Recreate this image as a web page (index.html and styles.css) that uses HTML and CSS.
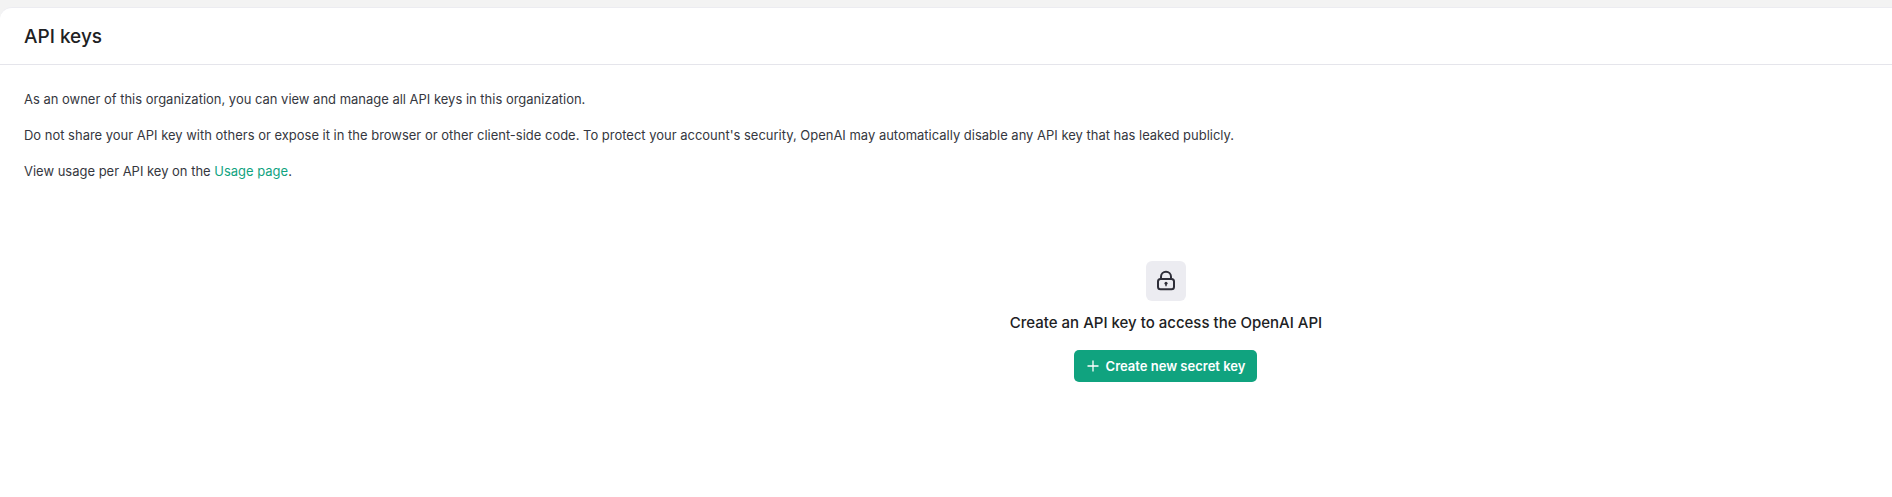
FILE: index.html
```html
<!DOCTYPE html>
<html lang="en">
<head>
<meta charset="utf-8">
<title>API keys</title>
<link rel="stylesheet" href="styles.css">
</head>
<body>
<main class="card">
  <header class="head"><h1 class="title">API keys</h1></header>
  <section class="intro">
    <p>As an owner of this organization, you can view and manage all API keys in this organization.</p>
    <p>Do not share your API key with others or expose it in the browser or other client-side code. To protect your account's security, OpenAI may automatically disable any API key that has leaked publicly.</p>
    <p>View usage per API key on the <a class="link" href="#">Usage page</a>.</p>
  </section>
  <section class="empty">
    <div class="lock">
      <svg width="24" height="24" viewBox="0 0 24 24" fill="none" stroke="#2e2e38" stroke-width="2"><rect x="4" y="10" width="16" height="10.300" rx="2.500"/><path d="M7 10V7.700a5 5 0 0 1 10 0V10"/><circle cx="12" cy="14.300" r="1.500" fill="#2e2e38" stroke="none"/><path d="M12 15v2.200" stroke-width="1.400"/></svg>
    </div>
    <h2 class="empty-title">Create an API key to access the OpenAI API</h2>
    <button class="btn" type="button">
      <svg width="14" height="14" viewBox="0 0 14 14" fill="none" stroke="#fff" stroke-width="1.300"><path d="M7 1.500v11M1.500 7h11"/></svg>
      <span>Create new secret key</span>
    </button>
  </section>
</main>
</body>
</html>
```
FILE: styles.css
```css
html, body { margin: 0; padding: 0; height: 100%; }
body {
  background: #f3f3f3;
  padding-top: 7px;
  box-sizing: border-box;
  font-family: Inter, "Liberation Sans", sans-serif;
  color: #353740;
  overflow: hidden;
}
.card {
  background: #fff;
  border-top: 1px solid #ececf1;
  border-top-left-radius: 12px;
  height: 100%;
}
.head {
  height: 57px;
  box-sizing: border-box;
  border-bottom: 1px solid #e5e5eb;
  padding: 0 24px;
  display: flex;
  align-items: center;
}
.title { margin: 0; font-size: 19px; font-weight: 500; color: #202123; }
.intro { padding: 24px 24px 0; font-size: 12.980px; line-height: 20px; }
.intro p { margin: 0 0 16px; }
.intro p:last-child { margin-bottom: 0; }
.link { color: #10a37f; text-decoration: none; }
.empty {
  display: flex;
  flex-direction: column;
  align-items: center;
  margin-top: 80px;
  margin-left: 440px;
}
.lock {
  width: 40px; height: 40px;
  border-radius: 6px;
  background: #ececf1;
  display: flex; align-items: center; justify-content: center;
}
.empty-title { margin: 12px 0 0; font-size: 15px; line-height: 20px; font-weight: 500; color: #202123; }
.btn {
  margin: 17px 1px 0 0;
  width: 183px; height: 32px;
  border: 0;
  border-radius: 5px;
  background: #10a37f;
  color: #fff;
  font: 600 13px Inter, "Liberation Sans", sans-serif;
  display: flex; align-items: center; justify-content: center; gap: 6px;
}
```
